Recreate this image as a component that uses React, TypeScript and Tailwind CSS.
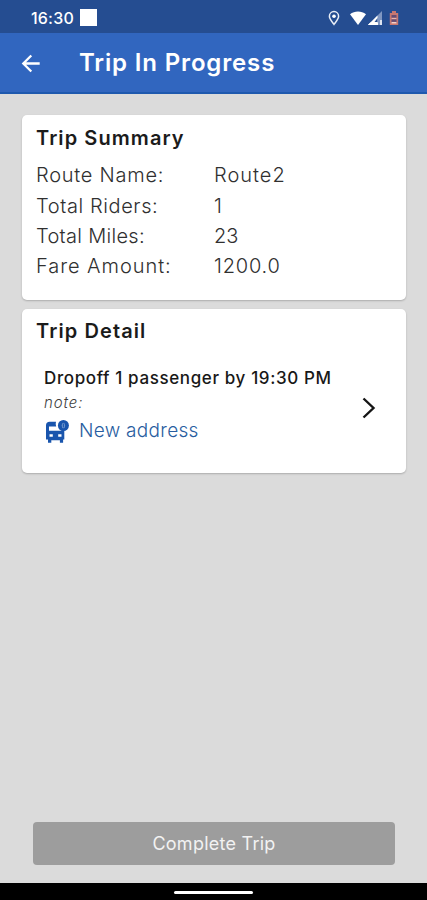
import React from "react";

const summary = [
  { label: "Route Name:", value: "Route2", labelGap: "tracking-[0.75px]", valueGap: "tracking-[1px]" },
  { label: "Total Riders:", value: "1", labelGap: "tracking-[0.6px]", valueGap: "tracking-[0px]" },
  { label: "Total Miles:", value: "23", labelGap: "tracking-[0.3px]", valueGap: "tracking-[0px]" },
  { label: "Fare Amount:", value: "1200.0", labelGap: "tracking-[0.95px]", valueGap: "tracking-[0.8px]" },
];

function StatusBar() {
  return (
    <div className="flex h-[33px] shrink-0 items-center bg-[#254d91] pl-[31px] pr-[28px] pt-[2px] text-white">
      <span className="w-[49px] text-[16px] font-medium leading-5 tracking-[0.2px]">16:30</span>
      <span className="h-[17px] w-[17px] bg-white" />
      <svg className="ml-auto h-4 w-3" viewBox="0 0 12 16" fill="none">
        <path d="M6 14.4C3.4 11 1.4 8.9 1.4 6.2a4.6 4.6 0 0 1 9.2 0C10.6 8.9 8.6 11 6 14.4Z" stroke="#e8edf6" strokeWidth="1.5" />
        <circle cx="6" cy="6.2" r="1.8" fill="#fff" />
      </svg>
      <svg className="ml-[10px] h-4 w-4" viewBox="0 0 16 16">
        <path d="M0 4.2C4.7.5 11.3.5 16 4.2L8 15Z" fill="#fff" />
      </svg>
      <svg className="ml-[2px] h-4 w-[14px]" viewBox="0 0 14 16">
        <path d="M14 1v14H0Z" fill="#8097c2" />
        <path d="M9.5 5.5V15H0Z" fill="#fff" />
        <path d="M6.5 12 9.5 8V12Z" fill="#254d91" />
        <path d="M0 15h10v-2.5H2.3Z" fill="#fff" />
        <path d="M12 10h2v5h-2z" fill="#dce3f0" />
      </svg>
      <svg className="ml-[7px] h-4 w-[10px]" viewBox="0 0 10 16" fill="none">
        <path d="M3 1h4v2h2.2v12H.8V3H3Z" fill="#c77770" />
        <path d="M2.5 5h5v8h-5z" fill="#674c72" />
        <path d="M2.5 8.5h5" stroke="#efb4a9" strokeWidth="1.4" />
        <path d="M2.5 12.7h5" stroke="#f3cfc8" strokeWidth="1.5" />
      </svg>
    </div>
  );
}

function BusStopIcon() {
  return (
    <svg className="mr-[9px] mt-[2px] h-[24px] w-[26px]" viewBox="0 0 26 24">
      <path
        fill="#1955ad"
        fillRule="evenodd"
        d="M5.5 1.8H12a7 7 0 0 0 .2 4.7H5v4.3h12.6v-1c.9.3 1.8.5 2.7.5v9.2h-1.2v3.3h-3.2v-2.5H7.3v2.5H4v-3.3H2V5.2C2 3 3.4 1.8 5.5 1.8ZM5.5 14.2v2.6h3.3v-2.6Zm8.7 0v2.6h3.3v-2.6Z"
      />
      <circle cx="19.4" cy="5.5" r="5.5" fill="#1955ad" />
      <ellipse cx="19.4" cy="5.5" rx="1.7" ry="2.8" fill="#6c94cc" />
      <path d="M19.4 3.6v3.8" stroke="#1955ad" strokeWidth="1" />
    </svg>
  );
}

export default function App() {
  return (
    <main className="flex h-[900px] w-[427px] flex-col overflow-hidden whitespace-nowrap bg-[#dbdbdb] font-['Inter','Liberation_Sans',sans-serif]">
      <StatusBar />
      <header className="flex h-[61px] shrink-0 items-center border-b-2 border-[#1e59ae] bg-[#3166bf] pl-[21px] text-white">
        <svg className="h-5 w-5" viewBox="0 0 20 20" fill="none" stroke="currentColor" strokeWidth="2.3">
          <path d="M18.7 10.5H2.6M10.3 2.5l-8 8 8 8" />
        </svg>
        <h1 className="ml-[38px] text-[24px] font-semibold leading-8 tracking-[0.85px]">Trip In Progress</h1>
      </header>

      <div className="flex flex-1 flex-col px-[21px] pt-[21px]">
        <section className="ml-px h-[185px] w-[384px] rounded-[5px] bg-white pl-[14px] pt-[10px] shadow-[0_1px_2px_rgba(0,0,0,0.22)]">
          <h2 className="text-[20px] font-semibold leading-[26px] tracking-[1.08px] text-[#1b1b1b]">Trip Summary</h2>
          <dl className="mt-[9px] text-[20px] font-light text-[#303030]">
            {summary.map((item) => (
              <div key={item.label} className="flex h-[30.4px] items-center leading-[30px]">
                <dt className={`w-[178px] ${item.labelGap}`}>{item.label}</dt>
                <dd className={item.valueGap}>{item.value}</dd>
              </div>
            ))}
          </dl>
        </section>

        <section className="ml-px mt-[9px] h-[164px] w-[384px] rounded-[5px] bg-white pl-[14px] pt-[9px] shadow-[0_1px_2px_rgba(0,0,0,0.22)]">
          <h2 className="text-[20px] font-semibold leading-[26px] tracking-[1.1px] text-[#1b1b1b]">Trip Detail</h2>
          <button className="ml-[8px] mt-[22px] flex w-[332px] items-center justify-between text-left">
            <span className="flex flex-col">
              <span className="text-[17px] font-medium leading-6 tracking-[0.62px] text-[#181818]">Dropoff 1 passenger by 19:30 PM</span>
              <span className="mt-px text-[15px] font-light italic leading-6 tracking-[0.9px] text-[#3f3f3f]">note:</span>
              <span className="mt-[2px] flex items-center text-[19px] font-light leading-7 tracking-[0.3px] text-[#285da0]">
                <BusStopIcon />
                <span>New address</span>
              </span>
            </span>
            <svg className="mt-[4px] h-6 w-[14px] shrink-0" viewBox="0 0 14 24" fill="none" stroke="#151515" strokeWidth="2.4">
              <path d="m1.5 2.5 10 9.5-10 9.5" />
            </svg>
          </button>
        </section>

        <button className="mb-[18px] ml-[12px] mt-auto h-[43px] w-[362px] rounded-[4px] bg-[#9d9d9d] pb-px text-[18px] tracking-[0.25px] text-[#f2f2f2]">Complete Trip</button>
      </div>
      <footer className="flex h-[17px] shrink-0 items-center justify-center bg-black pt-[2px]">
        <span className="h-[3px] w-[79px] rounded-full bg-white" />
      </footer>
    </main>
  );
}
